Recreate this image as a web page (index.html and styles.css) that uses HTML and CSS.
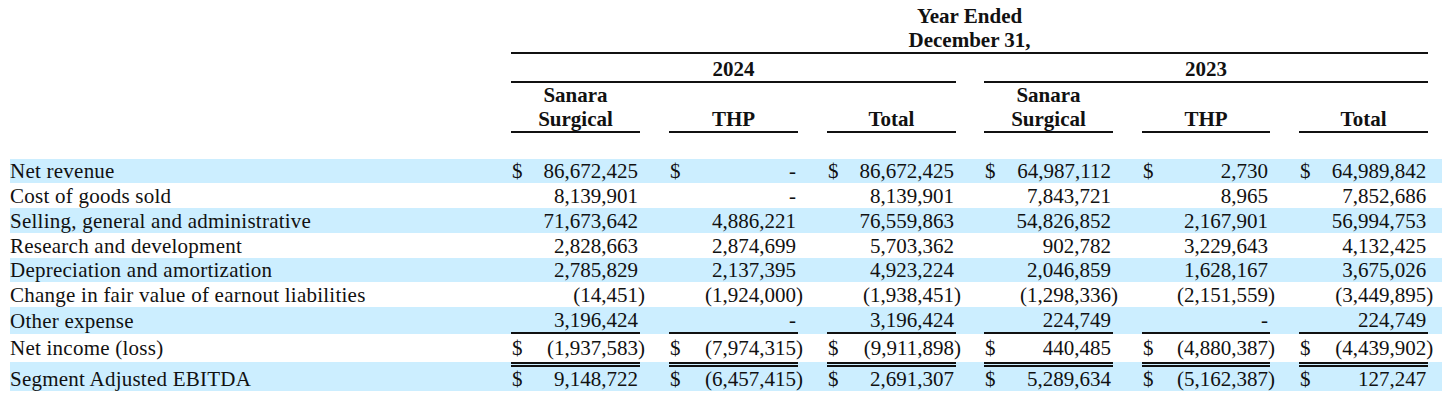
FILE: index.html
```html
<!DOCTYPE html>
<html lang="en">
<head>
<meta charset="utf-8">
<title>Segment Adjusted EBITDA</title>
<link rel="stylesheet" href="styles.css">
</head>
<body>
<table class="fin">
  <colgroup>
    <col class="c-label">
    <col class="c-cur"><col class="c-num"><col class="c-gap">
    <col class="c-cur"><col class="c-num"><col class="c-gap">
    <col class="c-cur"><col class="c-num"><col class="c-gap28">
    <col class="c-cur"><col class="c-num"><col class="c-gap">
    <col class="c-cur"><col class="c-num110"><col class="c-gap">
    <col class="c-cur"><col class="c-num"><col class="c-end">
  </colgroup>
  <thead>
    <tr class="hd-year">
      <td></td>
      <th colspan="17" class="rule">Year Ended<br>December 31,</th>
      <td></td>
    </tr>
    <tr class="hd-period">
      <td></td>
      <th colspan="8" class="rule">2024</th>
      <td></td>
      <th colspan="8" class="rule">2023</th>
      <td></td>
    </tr>
    <tr class="hd-seg">
      <td></td>
      <th colspan="2" class="rule">Sanara<br>Surgical</th><td></td>
      <th colspan="2" class="rule">THP</th><td></td>
      <th colspan="2" class="rule">Total</th><td></td>
      <th colspan="2" class="rule">Sanara<br>Surgical</th><td></td>
      <th colspan="2" class="rule">THP</th><td></td>
      <th colspan="2" class="rule">Total</th><td></td>
    </tr>
    <tr class="spacer"><td colspan="19"></td></tr>
  </thead>
  <tbody>
    <tr class="r24 band">
      <td class="label">Net revenue</td>
      <td class="cur">$</td><td class="num">86,672,425</td><td></td>
      <td class="cur">$</td><td class="num">-</td><td></td>
      <td class="cur">$</td><td class="num">86,672,425</td><td></td>
      <td class="cur">$</td><td class="num">64,987,112</td><td></td>
      <td class="cur">$</td><td class="num">2,730</td><td></td>
      <td class="cur">$</td><td class="num">64,989,842</td><td></td>
    </tr>
    <tr class="r25">
      <td class="label">Cost of goods sold</td>
      <td></td><td class="num">8,139,901</td><td></td>
      <td></td><td class="num">-</td><td></td>
      <td></td><td class="num">8,139,901</td><td></td>
      <td></td><td class="num">7,843,721</td><td></td>
      <td></td><td class="num">8,965</td><td></td>
      <td></td><td class="num">7,852,686</td><td></td>
    </tr>
    <tr class="r25 band">
      <td class="label">Selling, general and administrative</td>
      <td></td><td class="num">71,673,642</td><td></td>
      <td></td><td class="num">4,886,221</td><td></td>
      <td></td><td class="num">76,559,863</td><td></td>
      <td></td><td class="num">54,826,852</td><td></td>
      <td></td><td class="num">2,167,901</td><td></td>
      <td></td><td class="num">56,994,753</td><td></td>
    </tr>
    <tr class="r25">
      <td class="label">Research and development</td>
      <td></td><td class="num">2,828,663</td><td></td>
      <td></td><td class="num">2,874,699</td><td></td>
      <td></td><td class="num">5,703,362</td><td></td>
      <td></td><td class="num">902,782</td><td></td>
      <td></td><td class="num">3,229,643</td><td></td>
      <td></td><td class="num">4,132,425</td><td></td>
    </tr>
    <tr class="r24 band">
      <td class="label">Depreciation and amortization</td>
      <td></td><td class="num">2,785,829</td><td></td>
      <td></td><td class="num">2,137,395</td><td></td>
      <td></td><td class="num">4,923,224</td><td></td>
      <td></td><td class="num">2,046,859</td><td></td>
      <td></td><td class="num">1,628,167</td><td></td>
      <td></td><td class="num">3,675,026</td><td></td>
    </tr>
    <tr class="r25">
      <td class="label">Change in fair value of earnout liabilities</td>
      <td></td><td class="num">(14,451<span class="hang">)</span></td><td></td>
      <td></td><td class="num">(1,924,000<span class="hang">)</span></td><td></td>
      <td></td><td class="num">(1,938,451<span class="hang">)</span></td><td></td>
      <td></td><td class="num">(1,298,336<span class="hang">)</span></td><td></td>
      <td></td><td class="num">(2,151,559<span class="hang">)</span></td><td></td>
      <td></td><td class="num">(3,449,895<span class="hang">)</span></td><td></td>
    </tr>
    <tr class="r-other band">
      <td class="label">Other expense</td>
      <td class="under"></td><td class="num under">3,196,424</td><td></td>
      <td class="under"></td><td class="num under">-</td><td></td>
      <td class="under"></td><td class="num under">3,196,424</td><td></td>
      <td class="under"></td><td class="num under">224,749</td><td></td>
      <td class="under"></td><td class="num under">-</td><td></td>
      <td class="under"></td><td class="num under">224,749</td><td></td>
    </tr>
    <tr class="r-net">
      <td class="label">Net income (loss)</td>
      <td class="cur">$</td><td class="num">(1,937,583<span class="hang">)</span></td><td></td>
      <td class="cur">$</td><td class="num">(7,974,315<span class="hang">)</span></td><td></td>
      <td class="cur">$</td><td class="num">(9,911,898<span class="hang">)</span></td><td></td>
      <td class="cur">$</td><td class="num">440,485</td><td></td>
      <td class="cur">$</td><td class="num">(4,880,387<span class="hang">)</span></td><td></td>
      <td class="cur">$</td><td class="num">(4,439,902<span class="hang">)</span></td><td></td>
    </tr>
    <tr class="r-total band">
      <td class="label">Segment Adjusted EBITDA</td>
      <td class="cur dbl">$</td><td class="num dbl">9,148,722</td><td></td>
      <td class="cur dbl">$</td><td class="num dbl">(6,457,415<span class="hang">)</span></td><td></td>
      <td class="cur dbl">$</td><td class="num dbl">2,691,307</td><td></td>
      <td class="cur dbl">$</td><td class="num dbl">5,289,634</td><td></td>
      <td class="cur dbl">$</td><td class="num dbl">(5,162,387<span class="hang">)</span></td><td></td>
      <td class="cur dbl">$</td><td class="num dbl">127,247</td><td></td>
    </tr>
  </tbody>
</table>
</body>
</html>
```
FILE: styles.css
```css
html, body {
  margin: 0;
  padding: 0;
  background: #ffffff;
}

body {
  font-family: "Liberation Serif", "Times New Roman", serif;
  color: #111111;
}

.fin {
  margin-left: 10px;
  width: 1432px;
  table-layout: fixed;
  border-collapse: separate;
  border-spacing: 0;
  font-size: 21px;
  line-height: 24px;
}

.c-label { width: 501px; }
.c-cur { width: 18px; }
.c-num { width: 111px; }
.c-num110 { width: 110px; }
.c-gap { width: 29px; }
.c-gap28 { width: 28px; }
.c-end { width: 14px; }

.fin td,
.fin th {
  padding: 0;
  white-space: nowrap;
  overflow: visible;
}

.fin th {
  font-weight: bold;
  text-align: center;
  vertical-align: bottom;
}

.rule {
  border-bottom: 2px solid #111111;
}

.hd-year th {
  padding-top: 4px;
}

.hd-period th {
  padding-top: 3px;
}

.spacer td {
  height: 26px;
}

.band {
  background: #cceeff;
}

.fin tbody td {
  vertical-align: middle;
}

.r24 { height: 24px; }
.r25 { height: 25px; }
.r-other { height: 27px; }
.r-net { height: 28px; }
.r-total { height: 29px; }

.fin .r-total td {
  vertical-align: bottom;
}

.label {
  text-align: left;
  letter-spacing: 0.24px;
}

.cur {
  text-align: left;
  padding-left: 1px !important;
}

.num {
  text-align: right;
  padding-right: 2px !important;
}

.hang {
  margin-right: -7px;
}

.under {
  border-bottom: 2px solid #111111;
}

.dbl {
  border-top: 5px double #111111;
}
```
